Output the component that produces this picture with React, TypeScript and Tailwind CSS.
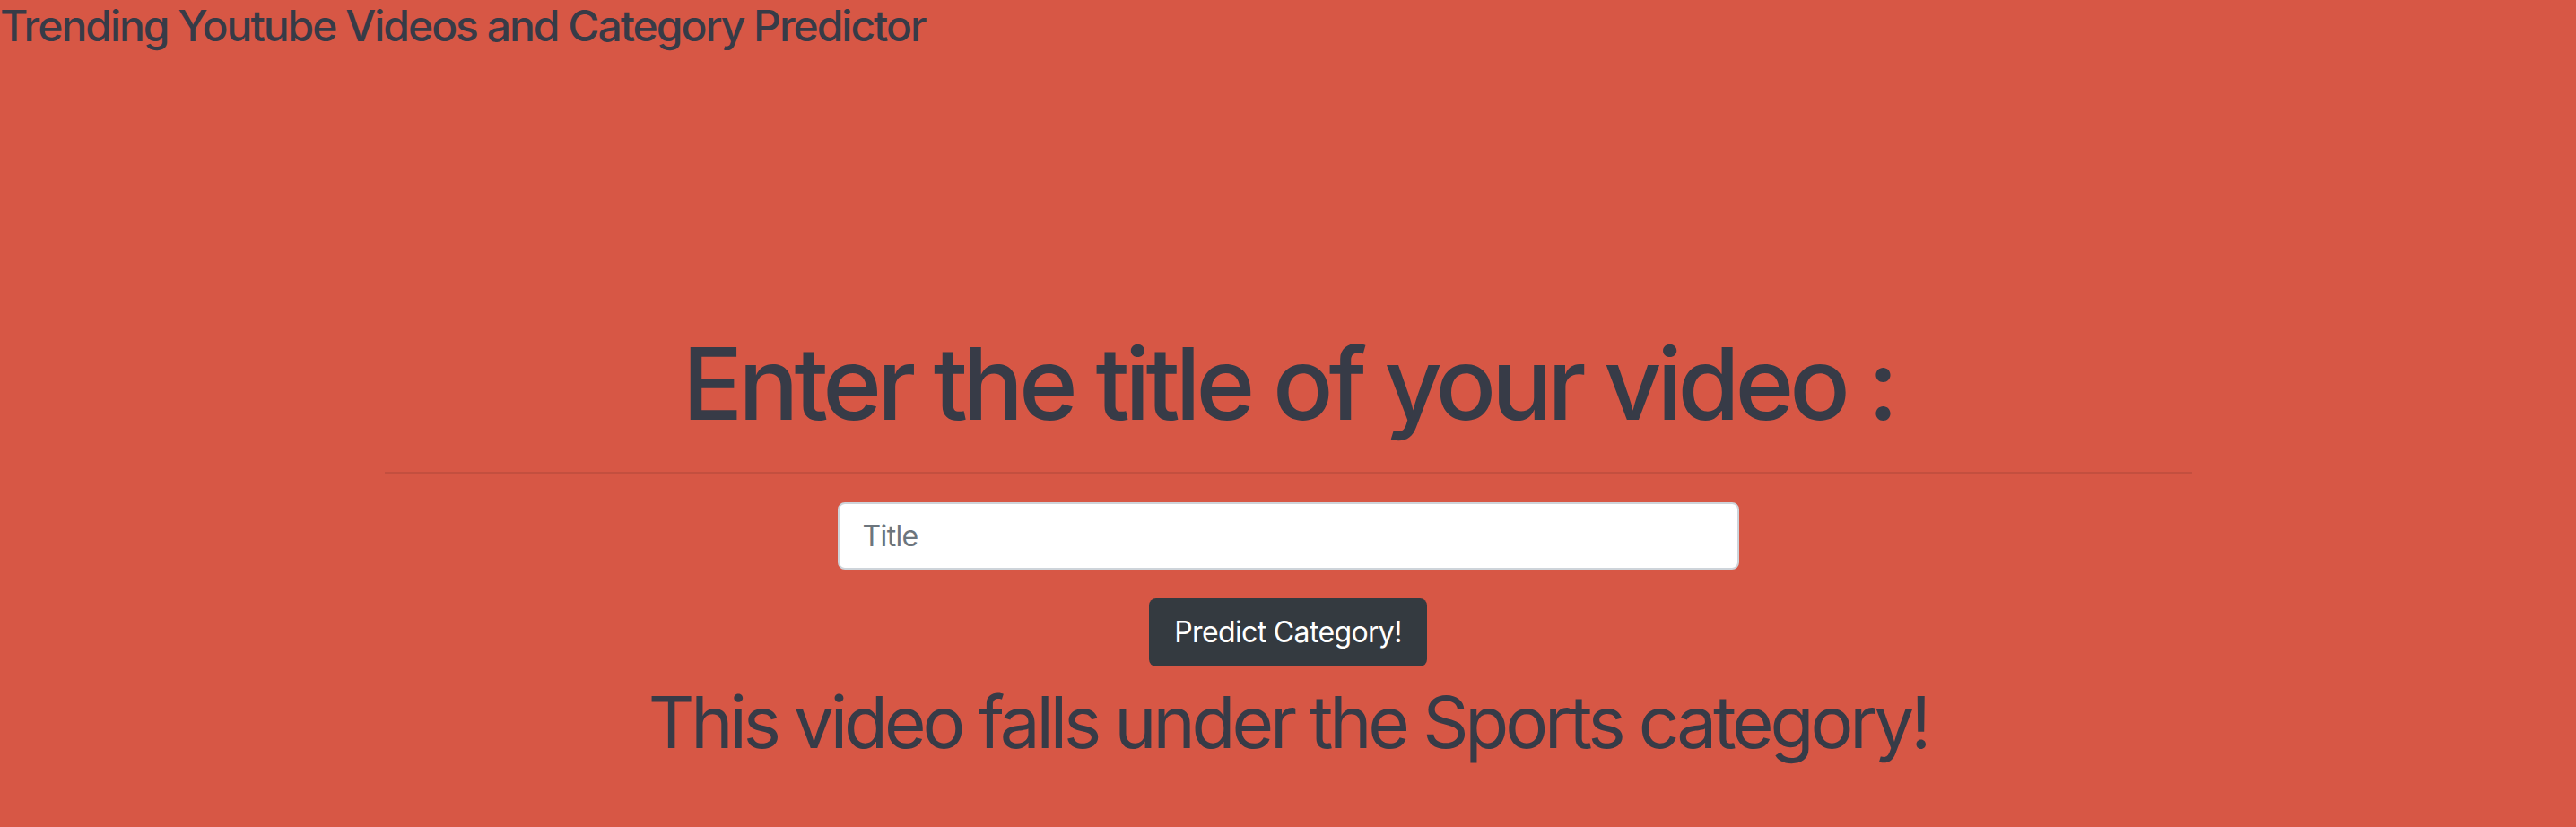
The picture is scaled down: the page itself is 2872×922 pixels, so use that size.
export default function App() {
  return (
    <div className="min-h-[922px] w-full bg-[#d75745] text-[#373b47] font-['Inter',sans-serif]">
      <p className="text-[48px] font-medium leading-[1.2] tracking-[-0.042em]">
        Trending Youtube Videos and Category Predictor
      </p>

      <main className="mx-auto mt-[302px] flex w-[2015px] flex-col items-center">
        <h1 className="text-[112px] font-medium leading-[1.2] tracking-[-0.046em]">
          Enter the title of your video :
        </h1>

        <hr className="mt-[32px] w-full border-t-2 border-[#c34f3f]" />

        <form className="mt-[32px] flex flex-col items-center" onSubmit={(e) => e.preventDefault()}>
          <input
            type="text"
            placeholder="Title"
            className="h-[75px] w-[1005px] rounded-[8px] border-2 border-[#ced4da] bg-white px-[26px] text-[32px] tracking-[-0.02em] text-[#495057] outline-none placeholder:text-[#6c757d]"
          />

          <button
            type="submit"
            className="mt-[32px] h-[76px] rounded-[8px] bg-[#343a40] px-[28px] text-[32px] tracking-[-0.02em] text-white"
          >
            Predict Category!
          </button>
        </form>

        <p className="mt-[14px] text-[80px] leading-[1.2] tracking-[-0.052em]">
          This video falls under the Sports category!
        </p>
      </main>
    </div>
  );
}
